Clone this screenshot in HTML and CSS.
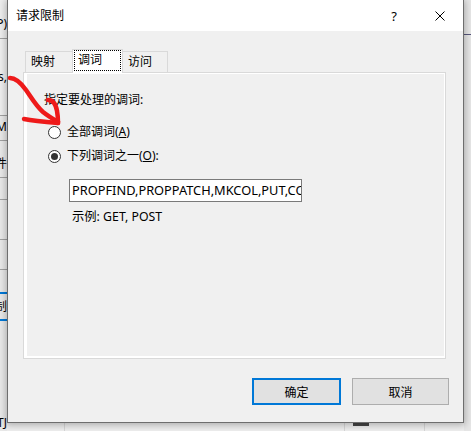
FILE: index.html
```html
<!DOCTYPE html>
<html lang="zh-CN">
<head>
<meta charset="utf-8">
<title>请求限制</title>
<link rel="stylesheet" href="styles.css">
</head>
<body>
<div class="desk">
  <div class="bg-left">
    <div class="bl-row r1"><span>(P)</span></div>
    <div class="bl-row r2"><span>ss,</span></div>
    <div class="bl-row r3"><span>M</span></div>
    <div class="bl-row r4"><span>文件</span></div>
    <div class="bl-row r5"></div>
    <div class="bl-row r6"></div>
    <div class="bl-row r7"></div>
    <div class="bl-row r8 blue"></div>
    <div class="bl-row r9 blue"><span>限制</span></div>
    <div class="bl-row r10"><span>TJ</span></div>
  </div>

  <div class="dialog">
    <div class="titlebar">
      <span class="title">请求限制</span>
      <span class="tb-btn">?</span>
      <span class="tb-btn">
        <svg width="10" height="10" viewBox="0 0 10 10"><path d="M0.5 0.5 L9.5 9.5 M9.5 0.5 L0.5 9.5" stroke="#000" stroke-width="1" fill="none"/></svg>
      </span>
    </div>
    <div class="body">
      <div class="tabs">
        <div class="tab tab1">映射</div>
        <div class="tab active"><span class="focus">调词</span></div>
        <div class="tab tab3">访问</div>
      </div>
      <div class="panel">
        <div class="label">指定要处理的调词:</div>
        <div class="radio-row first"><span class="radio"></span><span>全部调词(<u>A</u>)</span></div>
        <div class="radio-row second"><span class="radio checked"></span><span>下列调词之一(<u>O</u>):</span></div>
        <div class="input">PROPFIND,PROPPATCH,MKCOL,PUT,COPY,DELETE,MOVE,LOCK,UNLOCK</div>
        <div class="example">示例: GET, POST</div>
      </div>
      <div class="buttons">
        <div class="btn default">确定</div>
        <div class="btn cancel">取消</div>
      </div>
    </div>
  </div>

  <div class="bg-right">
    <div class="br-top"></div>
  </div>

  <div class="bg-bottom">
    <div class="bb-seg s1"></div>
    <div class="bb-seg s2"></div>
    <div class="bb-seg s3"><span class="frag"></span></div>
  </div>

  <svg class="annot" width="80" height="140" viewBox="0 0 80 140">
    <g stroke="#ee1a1a" stroke-width="4.5" fill="none" stroke-linecap="round" stroke-linejoin="round">
      <path d="M10 78 C16 78 21 83 26 90 C31 97 36 106 43 112 C48 116 53 119 58 122"/>
      <path d="M48 100 C53 100 56 105 57 111 C58 116 58 120 58 123"/>
      <path d="M24 119 C34 121 46 122 58 123"/>
    </g>
  </svg>
</div>
</body>
</html>
```
FILE: styles.css
```css
* { box-sizing: border-box; }
html, body { margin: 0; padding: 0; }
body {
  width: 471px;
  height: 431px;
  overflow: hidden;
  background: #ececec;
  font-family: "Noto Sans", "Noto Sans CJK SC", sans-serif;
  font-size: 12px;
  color: #000;
}
.desk {
  position: relative;
  display: grid;
  grid-template-columns: 7px 457px 7px;
  grid-template-rows: 423px 8px;
  width: 471px;
  height: 431px;
}

/* background window, left strip */
.bg-left {
  grid-column: 1;
  grid-row: 1 / 3;
  display: flex;
  flex-direction: column;
  background: #e8e8e8;
  overflow: hidden;
}
.bl-row {
  flex: none;
  display: flex;
  justify-content: flex-end;
  align-items: flex-start;
  white-space: nowrap;
  overflow: hidden;
  border-bottom: 1px solid #a0a0a0;
  line-height: 14px;
  font-size: 12px;
}
.bl-row.blue { border-bottom: 2px solid #0078d7; }
.r1 { height: 39px; padding-top: 17px; background: #ededed; }
.r2 { height: 77px; padding-top: 31px; background: #eeeeee; }
.r3 { height: 25px; padding-top: 4px; }
.r4 { height: 37px; padding-top: 16px; }
.r5 { height: 22px; }
.r6 { height: 40px; }
.r7 { height: 30px; }
.r8 { height: 24px; }
.r9 { height: 27px; padding-top: 6px; }
.r10 { flex: 1; border-bottom: 0; padding-top: 95px; }

/* dialog */
.dialog {
  grid-column: 2;
  grid-row: 1;
  position: relative;
  z-index: 1;
  display: flex;
  flex-direction: column;
  background: #f0f0f0;
  border: 1px solid #6e6e6e;
  border-top: 0;
  box-shadow: 0 1px 7px 1px rgba(0, 0, 0, 0.28);
}
.titlebar {
  height: 31px;
  flex: none;
  display: flex;
  align-items: center;
  background: #fff;
}
.title {
  flex: 1;
  padding-left: 8px;
  line-height: 31px;
}
.tb-btn {
  width: 46px;
  height: 31px;
  display: flex;
  align-items: center;
  justify-content: center;
  font-size: 13px;
}
.body {
  display: flex;
  flex-direction: column;
  padding: 18px 0 0 15px;
}
.tabs {
  display: flex;
  align-items: flex-end;
  height: 23px;
  padding-left: 2px;
}
.tab {
  height: 21px;
  border: 1px solid #d9d9d9;
  border-bottom: 0;
  background: #f0f0f0;
  padding-left: 5px;
  line-height: 20px;
}
.tab1 { width: 48px; }
.tab3 { width: 46px; margin-left: -1px; }
.tab.active {
  position: relative;
  z-index: 2;
  width: 51px;
  height: 24px;
  margin-left: -1px;
  margin-bottom: -1px;
  padding: 0;
  background: #fff;
}
.focus {
  display: block;
  height: 21px;
  margin: 0 1px;
  border: 1px dotted #000;
  padding-left: 3px;
  line-height: 17px;
}
.panel {
  width: 423px;
  height: 287px;
  border: 1px solid #d9d9d9;
  box-shadow: inset 3px 0 0 #fff, inset -1px 0 0 #fff, inset 0 1px 0 #fff, inset 0 -2px 0 #fff;
  padding: 19px 0 0 20px;
  display: flex;
  flex-direction: column;
  align-items: flex-start;
}
.label { line-height: 16px; }
.radio-row {
  display: flex;
  align-items: center;
  height: 16px;
  margin-left: 4px;
  line-height: 16px;
}
.radio-row.first { margin-top: 16px; }
.radio-row.second { margin-top: 8px; }
.radio {
  width: 13px;
  height: 13px;
  margin-right: 6px;
  border: 1px solid #333;
  border-radius: 50%;
  background: #fff;
  display: flex;
  align-items: center;
  justify-content: center;
}
.radio.checked::after {
  content: "";
  width: 7px;
  height: 7px;
  border-radius: 50%;
  background: #333;
}
.input {
  margin-top: 15px;
  margin-left: 25px;
  width: 233px;
  height: 23px;
  border: 1px solid #7a7a7a;
  background: #fff;
  padding-left: 2px;
  line-height: 21px;
  font-size: 12.8px;
  white-space: nowrap;
  overflow: hidden;
}
.example {
  margin-top: 7px;
  margin-left: 28px;
  line-height: 16px;
  font-size: 12.3px;
}
.buttons {
  display: flex;
  justify-content: flex-end;
  gap: 11px;
  margin-top: 19px;
  padding-right: 14px;
}
.btn {
  height: 27px;
  background: #e1e1e1;
  border: 1px solid #adadad;
  display: flex;
  align-items: center;
  justify-content: center;
}
.btn.default { width: 89px; border: 2px solid #0078d7; }
.btn.cancel { width: 97px; }

/* background window, right strip */
.bg-right {
  grid-column: 3;
  grid-row: 1 / 3;
  background: #e6e6e6;
}
.br-top {
  height: 35px;
  border-bottom: 1px solid #56567a;
}

/* background window, bottom strip */
.bg-bottom {
  grid-column: 2;
  grid-row: 2;
  display: flex;
  background: #eeeeee;
}
.bb-seg { height: 8px; border-right: 1px solid #d6d6d6; }
.s1 { width: 58px; }
.s2 { width: 280px; }
.s3 { width: 80px; padding-left: 8px; }
.frag {
  display: block;
  width: 16px;
  height: 3px;
  background: #444;
}

/* annotation drawn over the screenshot */
.annot {
  position: absolute;
  left: 0;
  top: 0;
  z-index: 5;
  pointer-events: none;
}
```
